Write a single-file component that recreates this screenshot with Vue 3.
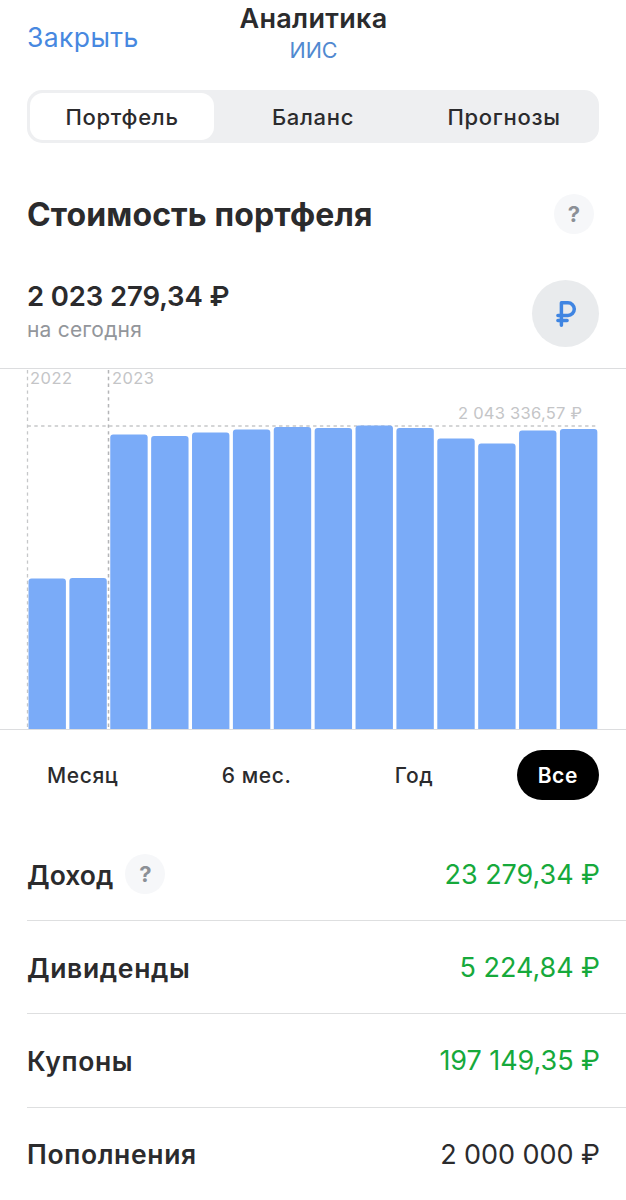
<template>
  <div class="screen">
    <!-- Header -->
    <header class="header">
      <button class="close-btn">Закрыть</button>
      <div class="header-title">
        <h1>Аналитика</h1>
        <span class="account">ИИС</span>
      </div>
    </header>

    <!-- Tabs -->
    <nav class="tabs">
      <button
        v-for="tab in tabs"
        :key="tab"
        class="tab"
        :class="{ active: tab === activeTab }"
        @click="activeTab = tab"
      >
        {{ tab }}
      </button>
    </nav>

    <div class="section-head">
      <h2>Стоимость портфеля</h2>
      <button class="help-btn">?</button>
    </div>

    <!-- Summary -->
    <div class="summary">
      <div>
        <div class="summary-value">2 023 279,34 ₽</div>
        <div class="summary-note">на сегодня</div>
      </div>
      <button class="currency-btn">
        <svg viewBox="0 0 24 30" width="24" height="30">
          <path d="M7.4 26.2V3.8h6.6a6.3 6.3 0 0 1 0 12.6H3.9M3.9 21.6h9.2"/>
        </svg>
      </button>
    </div>

    <!-- Chart -->
    <div class="chart">
      <svg viewBox="0 0 626 360" width="626" height="360">
        <line class="grid-line" x1="27.5" y1="1" x2="27.5" y2="360"/>
        <line class="grid-line strong" x1="108.5" y1="1" x2="108.5" y2="360"/>
        <line class="grid-line" x1="27.5" y1="57" x2="598" y2="57"/>
        <path v-for="(bar, i) in bars" :key="i" class="bar" :d="barPath(bar, i)"/>
        <text class="year" x="30" y="15" textLength="42">2022</text>
        <text class="year" x="112" y="15" textLength="42">2023</text>
        <text class="max" x="458" y="50" textLength="124">2 043 336,57 ₽</text>
      </svg>
    </div>

    <!-- Periods -->
    <div class="periods">
      <button
        v-for="period in periods"
        :key="period"
        class="period"
        :class="{ active: period === activePeriod }"
        @click="activePeriod = period"
      >
        {{ period }}
      </button>
    </div>

    <!-- Totals -->
    <ul class="totals">
      <li v-for="row in totals" :key="row.label" class="row">
        <span class="row-label" :class="{ tight: row.help }">{{ row.label }}</span>
        <button v-if="row.help" class="help-btn">?</button>
        <span class="row-value" :class="{ positive: row.positive }">{{ row.value }}</span>
      </li>
    </ul>
  </div>
</template>

<script setup>
import { ref } from 'vue'

const tabs = ['Портфель', 'Баланс', 'Прогнозы']
const activeTab = ref('Портфель')

const periods = ['Месяц', '6 мес.', 'Год', 'Все']
const activePeriod = ref('Все')

const totals = [
  { label: 'Доход', value: '23 279,34 ₽', positive: true, help: true },
  { label: 'Дивиденды', value: '5 224,84 ₽', positive: true },
  { label: 'Купоны', value: '197 149,35 ₽', positive: true },
  { label: 'Пополнения', value: '2 000 000 ₽', positive: false }
]

// bar heights in px, oldest month first
const bars = [150.5, 151, 294.5, 293, 296.5, 299.5, 302, 301, 303.5, 301, 290.5, 285.5, 298.5, 300]

const barPath = (height, i) => {
  const x = 28.5 + i * 40.88
  const w = 37.4
  const r = 3
  return `M${x} 360v${r - height}q0 ${-r} ${r} ${-r}h${w - 2 * r}q${r} 0 ${r} ${r}v${height - r}z`
}
</script>

<style>
body {
  margin: 0;
  background: #fff;
}
</style>

<style scoped>
.screen {
  width: 626px;
  height: 1200px;
  overflow: hidden;
  background: #fff;
  color: #2b2b2d;
  font-family: Inter, 'Liberation Sans', sans-serif;
}

button {
  border: none;
  padding: 0;
  background: none;
  color: inherit;
  font-family: inherit;
  cursor: pointer;
}

/* Header */
.header {
  display: grid;
  grid-template-columns: 1fr auto 1fr;
  height: 90px;
  padding: 0 27px;
}

.close-btn {
  justify-self: start;
  align-self: start;
  margin-top: 20px;
  font-size: 26.5px;
  line-height: 34px;
  letter-spacing: 0.4px;
  color: #4788e0;
}

.header-title {
  padding-left: 1px;
  text-align: center;
}

h1 {
  margin: 2px 0 0;
  font-size: 27px;
  line-height: 34px;
  font-weight: 600;
  letter-spacing: 0.3px;
}

.account {
  display: block;
  font-size: 21.5px;
  line-height: 28px;
  color: #5189d0;
}

/* Tabs */
.tabs {
  display: flex;
  height: 53px;
  box-sizing: border-box;
  margin: 0 27px;
  padding: 3px;
  border-radius: 15px;
  background: #eeeff1;
}

.tab {
  flex: 0 0 184px;
  border-radius: 13px;
  font-size: 22px;
  font-weight: 500;
  letter-spacing: 0.7px;
}

.tab:nth-child(2) {
  flex: 1;
}

.tab.active {
  background: #fff;
}

/* Section title */
.section-head {
  display: flex;
  align-items: center;
  justify-content: space-between;
  height: 40px;
  margin-top: 51px;
  padding: 0 32px 0 27px;
}

h2 {
  margin: 0;
  font-size: 32px;
  font-weight: 700;
  letter-spacing: 0.13px;
}

.help-btn {
  width: 40px;
  height: 40px;
  border-radius: 50%;
  background: #f6f7f9;
  color: #8c9096;
  font-size: 22px;
  font-weight: 700;
}

/* Summary */
.summary {
  display: flex;
  justify-content: space-between;
  height: 67px;
  margin-top: 46px;
  padding: 0 27px;
}

.summary-value {
  margin-top: -1px;
  font-size: 27.5px;
  line-height: 34px;
  font-weight: 600;
  letter-spacing: -0.13px;
}

.summary-note {
  margin-top: 2px;
  font-size: 21px;
  line-height: 30px;
  letter-spacing: 0.2px;
  color: #93969b;
}

.currency-btn {
  display: flex;
  align-items: center;
  justify-content: center;
  width: 67px;
  height: 67px;
  border-radius: 50%;
  background: #e9ebed;
}

.currency-btn svg {
  fill: none;
  stroke: #3f85e2;
  stroke-width: 3.5;
  stroke-linecap: round;
  stroke-linejoin: round;
}

/* Chart */
.chart {
  height: 360px;
  margin-top: 21px;
  border-top: 1px solid #dcdddf;
  border-bottom: 1px solid #dcdddf;
}

.chart svg {
  display: block;
}

.grid-line {
  stroke: #c6c7c9;
  stroke-width: 1.3;
  stroke-dasharray: 3.4 3.4;
}

.grid-line.strong {
  stroke: #b4b5b7;
  stroke-width: 1.5;
}

.bar {
  fill: #7aabf8;
}

.year,
.max {
  fill: #c4c5c7;
  font-size: 16.5px;
}

/* Periods */
.periods {
  display: flex;
  justify-content: space-between;
  height: 50px;
  margin-top: 20px;
  padding: 0 27px;
}

.period {
  padding: 0 20px;
  border-radius: 25px;
  font-size: 21px;
  font-weight: 500;
  letter-spacing: 0.6px;
}

.period.active {
  padding: 0 21px;
  background: #000;
  color: #fff;
  font-weight: 600;
}

/* Totals */
.totals {
  margin: 28px 0 0 27px;
  padding: 0;
  list-style: none;
}

.row {
  display: flex;
  align-items: center;
  height: 92.2px;
  padding-right: 26px;
  border-bottom: 1px solid #dedfe0;
}

.row:last-child {
  border-bottom: none;
}

.row-label {
  padding-top: 1px;
  font-size: 26.5px;
  font-weight: 600;
  letter-spacing: 0.65px;
}

.row-label.tight {
  letter-spacing: 0.05px;
}

.row .help-btn {
  margin-left: 12px;
}

.row-value {
  margin-left: auto;
  padding-top: 1px;
  font-size: 27px;
  letter-spacing: -0.05px;
}

.row-value.positive {
  color: #16a93b;
}
</style>
